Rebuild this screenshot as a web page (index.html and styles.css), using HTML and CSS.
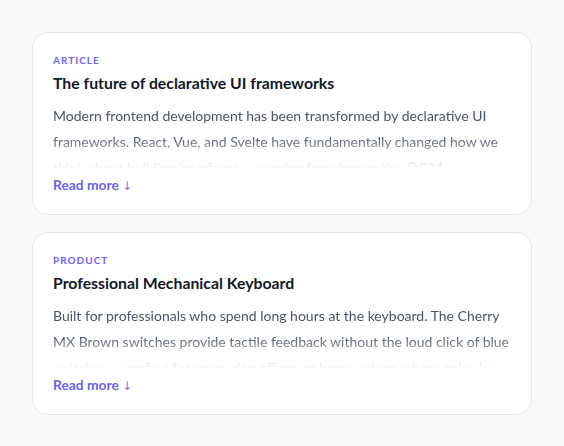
FILE: index.html
```html
<!DOCTYPE html>
<html>
<head>
<meta charset="utf-8">
<link rel="stylesheet" href="styles.css">
</head>
<body>
<main class="list">
  <article class="card">
    <div class="label">Article</div>
    <h2 class="title">The future of declarative UI frameworks</h2>
    <div class="excerpt">
      <p>Modern frontend development has been transformed by declarative UI frameworks. React, Vue, and Svelte have fundamentally changed how we think about building interfaces — moving from imperative DOM manipulation to describing what the UI should look like for any given state.</p>
    </div>
    <a class="more" href="#">Read more <span class="arrow">↓</span></a>
  </article>
  <article class="card">
    <div class="label">Product</div>
    <h2 class="title">Professional Mechanical Keyboard</h2>
    <div class="excerpt">
      <p>Built for professionals who spend long hours at the keyboard. The Cherry MX Brown switches provide tactile feedback without the loud click of blue switches — perfect for open-plan offices or home setups where noise is a concern.</p>
    </div>
    <a class="more" href="#">Read more <span class="arrow">↓</span></a>
  </article>
</main>
</body>
</html>
```
FILE: styles.css
```css
html, body {
  margin: 0;
  padding: 0;
  background: #f8f9fb;
}
body {
  font-family: Lato, "Noto Sans", sans-serif;
  padding: 32px 32px;
}
.list {
  display: flex;
  flex-direction: column;
  gap: 17px;
  width: 500px;
}
.card {
  background: #fff;
  border: 1px solid #e3e6ec;
  border-radius: 16px;
  padding: 20px 20px 18px;
  display: flex;
  flex-direction: column;
}
.label {
  font-size: 10px;
  font-weight: 700;
  letter-spacing: 1px;
  text-transform: uppercase;
  color: #6b63e8;
  line-height: 14px;
}
.title {
  margin: 4px 0 0;
  font-size: 15.8px;
  font-weight: 700;
  color: #111827;
  line-height: 24px;
}
.excerpt {
  margin-top: 8px;
  height: 66px;
  overflow: hidden;
  -webkit-mask-image: linear-gradient(to bottom, #000 50%, transparent 100%);
  mask-image: linear-gradient(to bottom, #000 50%, transparent 100%);
}
.excerpt p {
  margin: 0;
  font-size: 14px;
  line-height: 26px;
  color: #4b5563;
}
.more {
  margin-top: 6px;
  font-size: 13.8px;
  font-weight: 700;
  color: #6b63e8;
  text-decoration: none;
  line-height: 20px;
}
.arrow {
  font-family: "DejaVu Sans", sans-serif;
  font-weight: 400;
  font-size: 12px;
  color: #7c75ee;
}
```
